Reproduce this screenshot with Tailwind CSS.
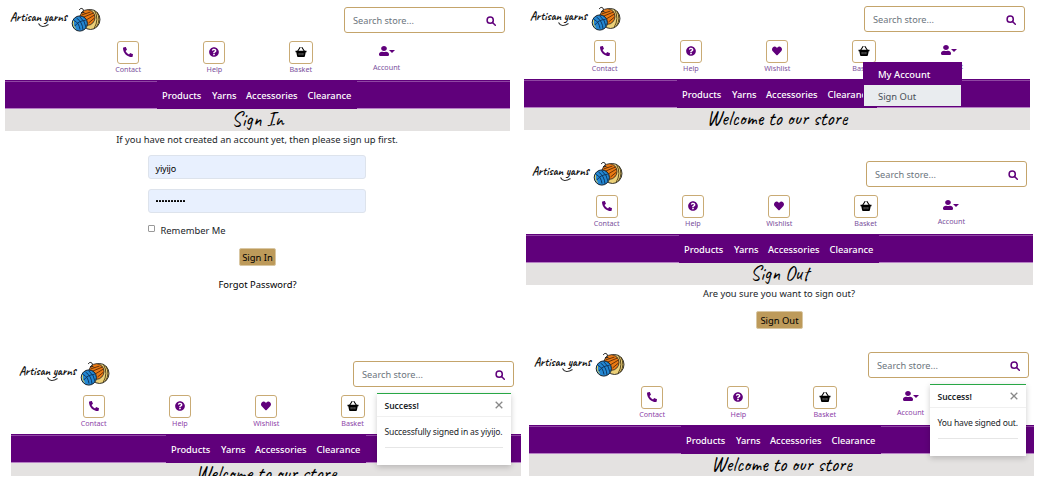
<!DOCTYPE html>
<html lang="en">
<head>
<meta charset="utf-8">
<title>Artisan Yarns</title>
<script src="https://cdn.jsdelivr.net/npm/@tailwindcss/browser@4"></script>
</head>
<body class="bg-white">
<svg class="hidden">
  <symbol id="phone" viewBox="0 0 512 512"><path transform="translate(512 0) scale(-1 1)" d="M493.4 24.6l-104-24c-11.3-2.6-22.9 3.3-27.5 13.9l-48 112c-4.2 9.8-1.4 21.3 6.9 28l60.6 49.6c-36 76.7-98.9 140.5-177.2 177.2l-49.6-60.6c-6.8-8.3-18.2-11.1-28-6.9l-112 48C3.9 366.5-2 378.1.6 389.4l24 104C27.1 504.2 36.7 512 48 512c256.1 0 464-207.5 464-464 0-11.2-7.7-20.9-18.6-23.4z"/></symbol>
  <symbol id="help" viewBox="0 0 512 512"><path d="M504 256c0 136.997-111.043 248-248 248S8 392.997 8 256C8 119.083 119.043 8 256 8s248 111.083 248 248zM262.655 90c-54.497 0-89.255 22.957-116.549 63.758-3.536 5.286-2.353 12.415 2.715 16.258l34.699 26.31c5.205 3.947 12.621 3.008 16.665-2.122 17.864-22.658 30.113-35.797 57.303-35.797 20.429 0 45.698 13.148 45.698 32.958 0 14.976-12.363 22.667-32.534 33.976C247.128 238.528 216 254.941 216 296v4c0 6.627 5.373 12 12 12h56c6.627 0 12-5.373 12-12v-1.333c0-28.462 83.186-29.647 83.186-106.667 0-58.002-60.165-102-116.531-102zM256 338c-25.365 0-46 20.635-46 46 0 25.364 20.635 46 46 46s46-20.636 46-46c0-25.365-20.635-46-46-46z"/></symbol>
  <symbol id="heart" viewBox="0 0 512 512"><path d="M462.3 62.6C407.5 15.9 326 24.3 275.7 76.2L256 96.5l-19.7-20.3C186.1 24.3 104.5 15.9 49.7 62.6c-62.8 53.6-66.1 149.8-9.9 207.9l193.5 199.8c12.5 12.9 32.8 12.9 45.3 0l193.5-199.8c56.3-58.1 53-154.3-9.8-207.9z"/></symbol>
  <symbol id="basket" viewBox="0 0 22 20"><path d="M0 7.500h22v3h-1.600L18.800 18.500q-.2 1.500-1.800 1.500h-12q-1.600 0-1.800-1.500L1.600 10.500H0z"/><path d="M4.500 8L9 1M17.500 8L13 1" stroke="currentColor" stroke-width="2.200" fill="none" stroke-linecap="round"/><path d="M7.200 12v4.500M11 12v4.500M14.800 12v4.500" stroke="#bbb" stroke-width="1.100"/></symbol>
  <symbol id="user" viewBox="0 0 448 512" preserveAspectRatio="none"><path d="M224 256c70.700 0 128-57.300 128-128S294.700 0 224 0 96 57.300 96 128s57.300 128 128 128zm89.600 32h-16.700c-22.200 10.200-46.900 16-72.900 16s-50.600-5.800-72.900-16h-16.700C60.200 288 0 348.200 0 422.400V464c0 26.500 21.500 48 48 48h352c26.500 0 48-21.500 48-48v-41.600c0-74.200-60.200-134.400-134.400-134.400z"/></symbol>
  <symbol id="logo" viewBox="0 0 92 26">
    <text x="0" y="13.500" font-family="Caveat, Lato, sans-serif" font-weight="600" font-size="14" textLength="57" lengthAdjust="spacingAndGlyphs" fill="#111">Artisan yarns</text>
    <path d="M28.500 16.500q3 5.500 10 1" stroke="#333" stroke-width="1.200" fill="none"/>
    <ellipse cx="80.500" cy="12.500" rx="9.500" ry="10" fill="#ecd078" stroke="#222" stroke-width=".9"/>
    <path d="M84.500 3.500q5 9-.5 18M87 5q4 8-.5 15" stroke="#4a3a14" stroke-width=".9" fill="none"/>
    <ellipse cx="77.500" cy="10.500" rx="7.500" ry="7.800" fill="#ea7a14" stroke="#222" stroke-width=".8"/>
    <path d="M71.500 8l9-3M71.500 11l12-5M74.500 14l10-6M78.500 16l6-5" stroke="#5c2a05" stroke-width=".9"/>
    <path d="M69 3q2-3 4-1t-2 4q4-1.500 4 .5" stroke="#222" stroke-width=".9" fill="none"/>
    <circle cx="69.800" cy="16.500" r="7.600" fill="#2387d2" stroke="#14202c" stroke-width="1"/>
    <path d="M64 13.500q5 2 6 9M66.500 11q6 4 6.500 12M69.500 9.500q6 5 6.500 11M64.500 19.500q4-6 11-6" stroke="#0b2f58" stroke-width=".9" fill="none"/>
    <path d="M63.500 14q-1.200 4.500 2 7.500" stroke="#d8cf6a" fill="none"/>
  </symbol>
</svg>

<div id="board" class="flex h-[495px] w-[1045px] overflow-hidden font-['Noto_Sans','Open_Sans',sans-serif] text-[9.4px] leading-[14px] text-[#212529]">
  <div id="left" class="w-[521px] shrink-0"></div>
  <div id="right" class="w-[524px] shrink-0"></div>
</div>

<script>
const boxed = (icon, label, wide, tint) => `
  <div class="flex w-[86.300px] shrink-0 flex-col items-center">
    <div class="${wide ? 'w-6' : 'w-[22px]'} flex h-[22.500px] shrink-0 items-center justify-center rounded-[3px] border border-[#c9ab75] ${wide ? 'text-black' : 'text-[#60007b]'}">
      <svg class="${wide ? 'h-[10px] w-[12px]' : 'size-[10px]'} fill-current"><use href="#${icon}"/></svg>
    </div>
    <span class="${tint} text-[7.2px] leading-[11px]">${label}</span>
  </div>`;

const account = tint => `
  <div class="flex w-[86.300px] shrink-0 flex-col items-center pt-[5px]">
    <div class="mr-px flex h-[10px] items-center text-[#60007b]">
      <svg class="h-[10px] w-[10px] fill-current"><use href="#user"/></svg>
      <svg class="h-[3px] w-[6px] fill-current" viewBox="0 0 6 3"><path d="M0 0h6L3 3z"/></svg>
    </div>
    <span class="${tint} mr-px mt-[6px] text-[7.2px] leading-[10px]">Account</span>
  </div>`;

const menu = `
  <div class="absolute left-[339px] top-[56px] w-[98.500px] bg-[#60007b] p-px pt-0 text-[9.400px]">
    <div class="h-[23px] pl-[14px] leading-[25px] font-medium text-white">My Account</div>
    <div class="h-[20.500px] bg-[#e9ecef] pl-[14px] leading-[23px] text-[#495057]">Sign Out</div>
  </div>`;

const toast = (text, place) => `
  <div class="${place} absolute top-[32px] h-[72px] border-t border-[#28a745] bg-white shadow-[0_2px_6px_rgba(0,0,0,0.2)]">
    <div class="flex h-[23px] items-center justify-between border-b border-[#f0f0f0] px-[7.500px]">
      <span class="mt-px text-[8.500px] font-semibold">Success!</span>
      <svg class="size-[8px] stroke-[#888]" viewBox="0 0 8 8" stroke-width="1.300"><path d="M.7.7l6.600 6.600M7.300.7L.7 7.300"/></svg>
    </div>
    <div class="mx-[7.500px] h-[31px] whitespace-nowrap border-b border-[#e6e6e6] pt-[8px] text-[8.600px] tracking-[-0.18px]">${text}</div>
  </div>`;

const form = `
  <div class="mx-auto mt-[8px] flex w-[218px] flex-col">
    <div class="-ml-px h-6 w-[218px] rounded-[3px] border border-[#dde3ec] bg-[#e8f0fe] pl-[7px] pt-[6px] text-[9px] tracking-[-0.2px] text-black">yiyijo</div>
    <div class="-ml-px mt-[10px] flex h-6 w-[218px] items-center gap-[1px] rounded-[3px] border border-[#dde3ec] bg-[#e8f0fe] pl-[7.500px] pt-px">
      ${'<i class="size-[2px] rounded-[0.500px] bg-black"></i>'.repeat(10)}
    </div>
    <div class="-ml-px mt-[11px] flex h-[14px] gap-[6px]"><i class="mt-px size-[7px] rounded-[1px] border border-[#999] bg-white"></i><span>Remember Me</span></div>
  </div>
  <div class="mx-auto mt-[10px] h-[18px] w-[37px] rounded-[2px] border border-[#d9c7a3] bg-[#bd9a5a] text-center leading-[18px] text-black">Sign In</div>
  <div class="mt-[12px] text-center text-black">Forgot Password?</div>`;

const confirmOut = `
  <div class="mx-auto mt-[10px] h-[18px] w-[47px] rounded-[2px] border border-[#d9c7a3] bg-[#bd9a5a] text-center leading-[18px] text-black">Sign Out</div>`;

const screen = s => `
<section class="relative overflow-hidden" style="margin-left:${s.x}px;margin-top:${s.gap}px;width:${s.w}px;height:${s.h}px">
  <div class="flex h-[34px] items-start justify-between" style="padding-left:${s.logo}px;padding-right:${s.pr}px">
    <svg class="h-[26px] w-[92px]"><use href="#logo"/></svg>
    <div class="flex h-[26px] w-[161px] items-center justify-between rounded-[3px] border border-[#c4a46b] pl-2 pr-[8px] text-[9.200px] text-[#6c757d]">
      <span class="pt-px">Search store...</span>
      <svg class="mt-[2px] size-[10px] fill-none stroke-[#60007b] stroke-[1.500]" viewBox="0 0 10 10"><circle cx="4.200" cy="4.200" r="3.100"/><path d="M6.500 6.500l2.800 2.800" stroke-linecap="round"/></svg>
    </div>
  </div>
  <div class="flex h-[39px]" style="padding-left:${s.icons}px">
    ${boxed('phone', 'Contact', false, s.tint)}${boxed('help', 'Help', false, s.tint)}${s.wish ? boxed('heart', 'Wishlist', false, s.tint) : ''}${boxed('basket', 'Basket', true, s.tint)}${s.noAccount ? '' : account(s.tint)}
  </div>
  <div class="flex h-[28.500px] flex-col bg-[#60007b] pt-px">
    <div class="flex h-[27.500px] w-full">
      <div class="shrink-0 border-y border-t-[#8f47a3] border-b-[#b67fc4]" style="width:${s.nav}px"></div>
      <div class="flex w-[200px] shrink-0 items-center pl-[5px] pt-[2px] text-[9.300px] font-medium text-white"><span class="w-[50px]">Products</span><span class="w-[34px]">Yarns</span><span class="w-[61.500px]">Accessories</span><span>Clearance</span></div>
      <div class="grow border-y border-t-[#8f47a3] border-b-[#b67fc4]"></div>
    </div>
  </div>
  <div class="flex h-[22px] items-center justify-center bg-[#e4e2e1] font-[Caveat,Lato,sans-serif] text-[20px] leading-[22px] text-black">
    <span class="whitespace-nowrap">${s.title}</span>
  </div>
  ${s.note ? `<p class="mt-[2px] pr-px text-center">${s.note}</p>` : ''}
  ${s.body || ''}
</section>`;

const soft = 'text-[#7a4f9c]', bright = 'text-[#8d3fa8]';
document.getElementById('left').innerHTML = [
  {x:5, gap:7, w:505, h:300, logo:5, pr:5, icons:80, nav:152, tint:soft, title:'Sign In', note:'If you have not created an account yet, then please sign up first.', body:form},
  {x:11, gap:54, w:510, h:115, logo:8, pr:7, icons:39.5, nav:155, tint:bright, wish:true, noAccount:true, title:'Welcome to our store', body:toast('Successfully signed in as yiyijo.', 'left-[366px] w-[133.500px]')}
].map(screen).join('');
document.getElementById('right').innerHTML = [
  {x:3, gap:6, w:506, h:140, logo:6, pr:5, icons:37.5, nav:153, tint:soft, wish:true, title:'Welcome to our store', body:menu},
  {x:5, gap:15, w:507, h:180, logo:6, pr:6, icons:37.5, nav:153, tint:soft, wish:true, title:'Sign Out', note:'Are you sure you want to sign out?', body:confirmOut},
  {x:8, gap:11, w:505, h:130, logo:5, pr:5, icons:80, nav:152, tint:bright, title:'Welcome to our store', body:toast('You have signed out.', 'left-[401px] w-[95.500px]')}
].map(screen).join('');
</script>
</body>
</html>
